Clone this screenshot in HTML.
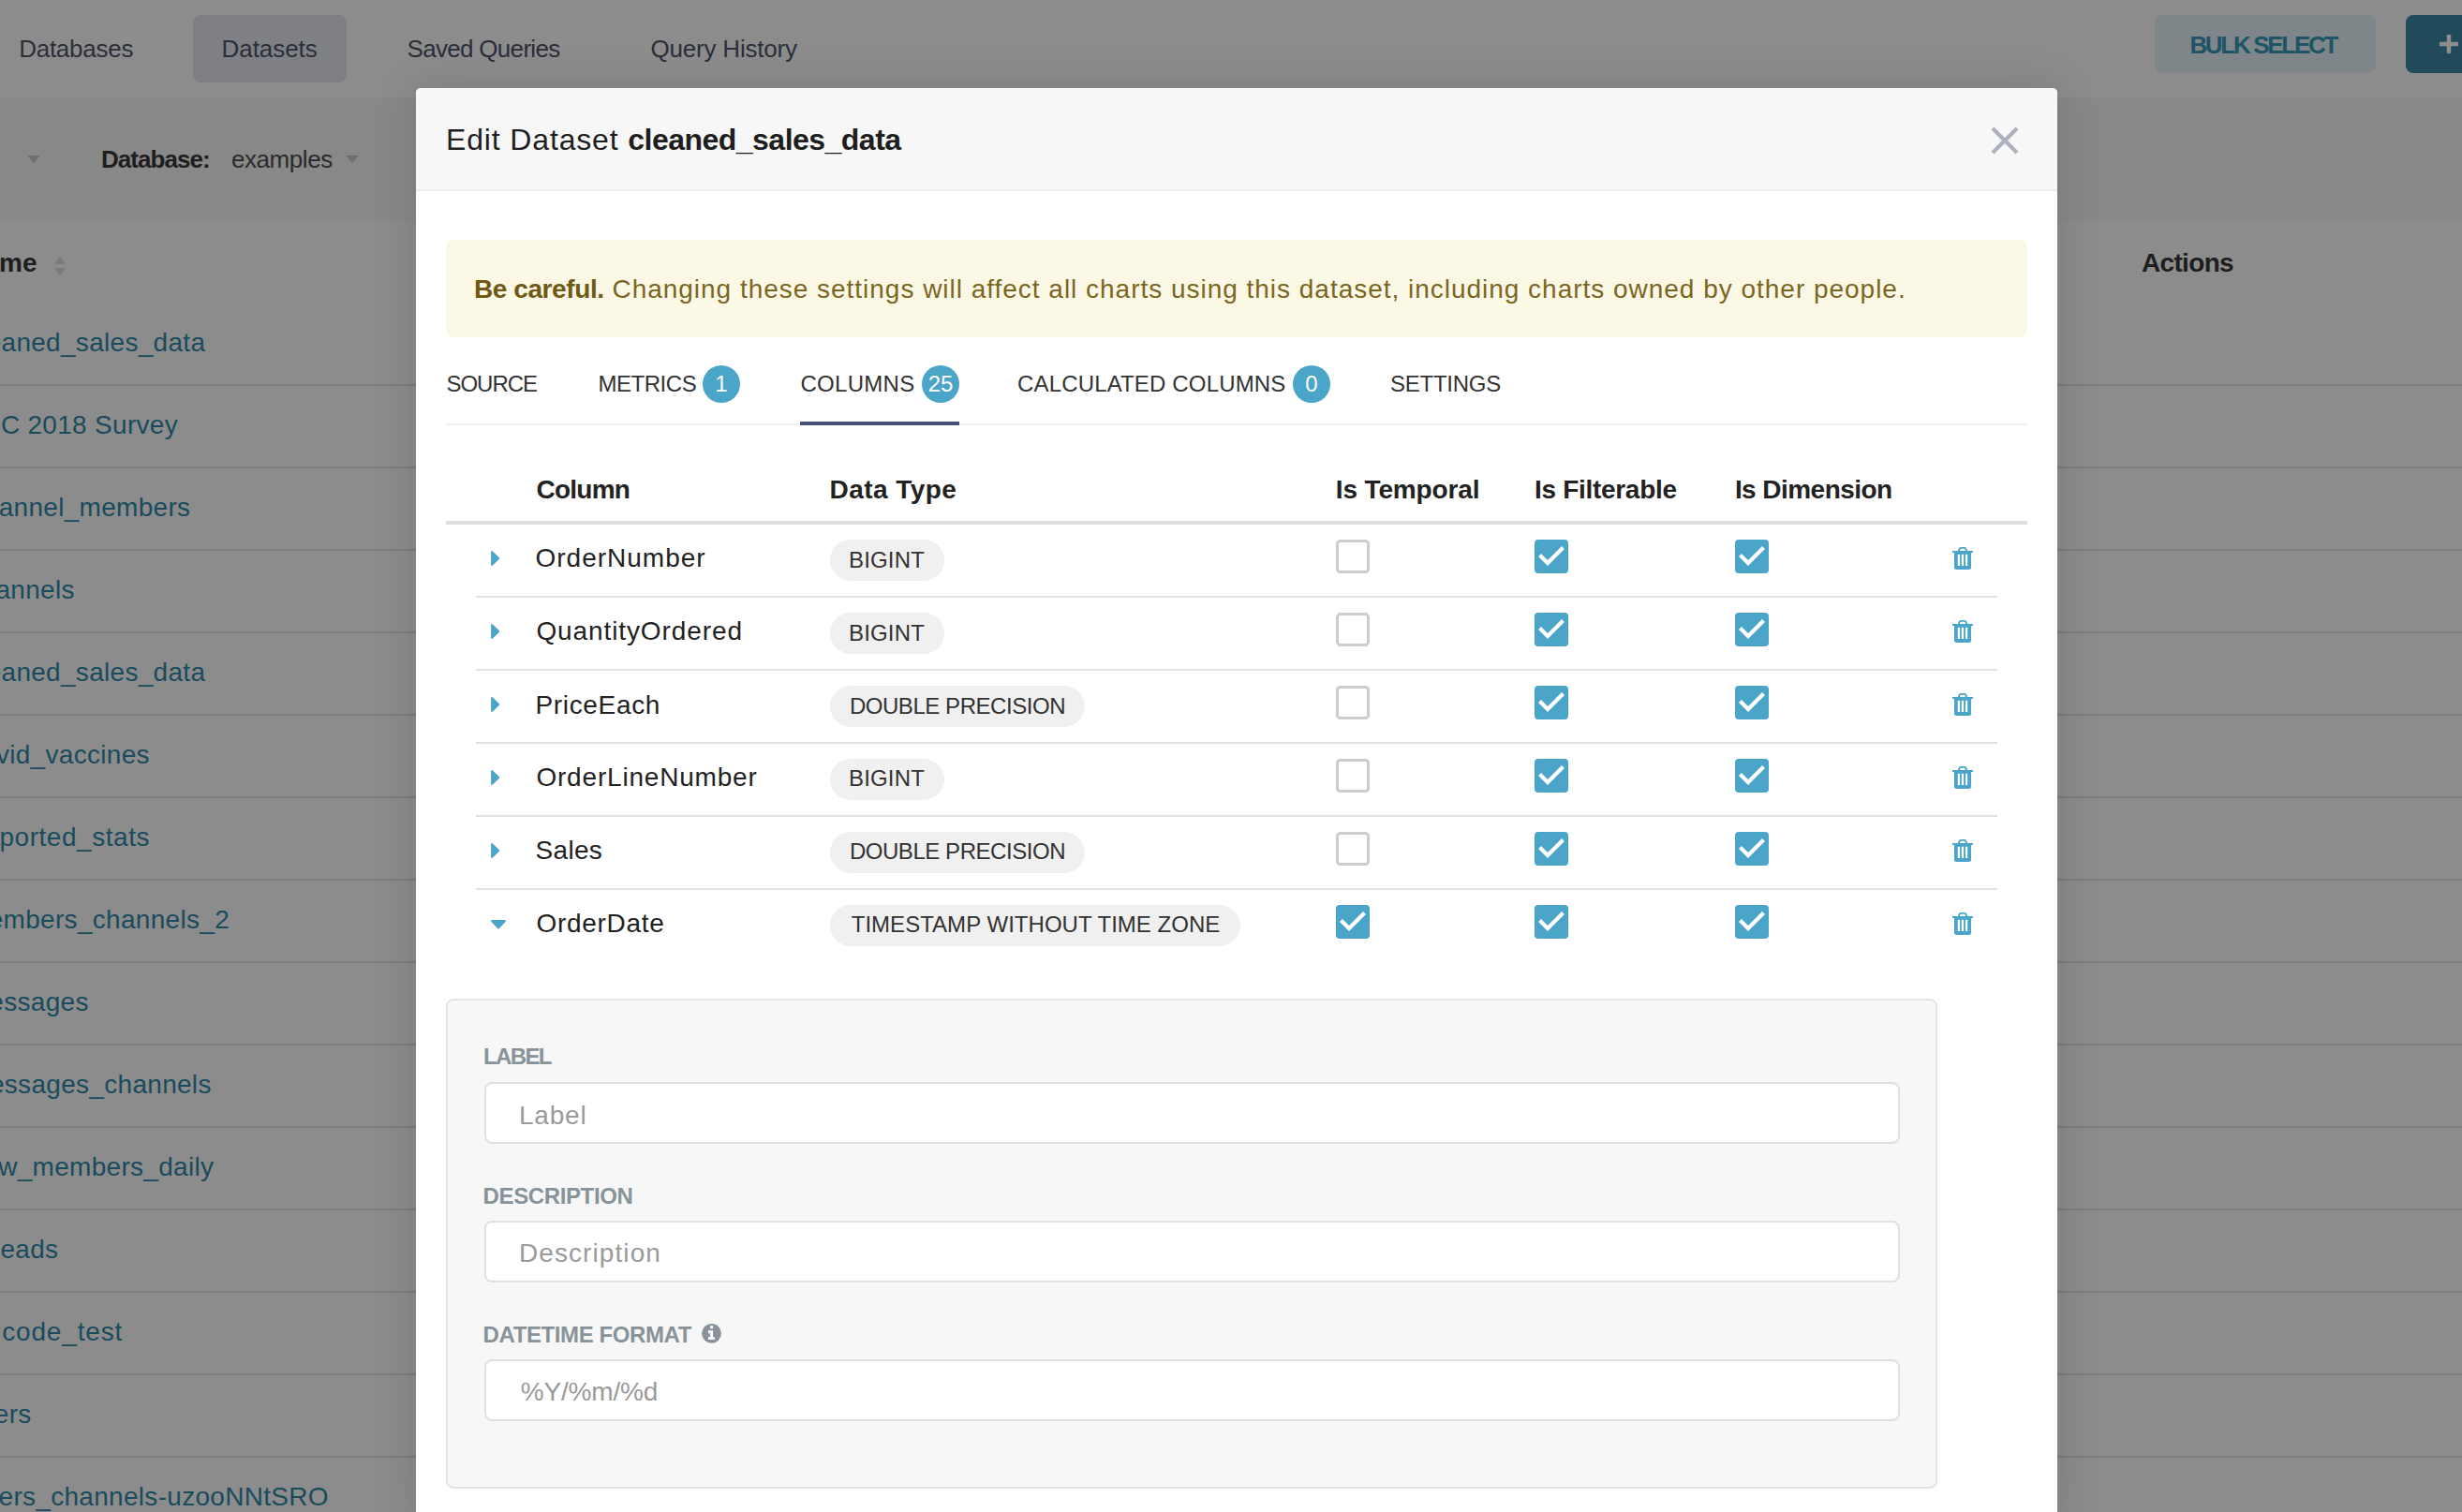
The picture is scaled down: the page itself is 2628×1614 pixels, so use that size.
<!DOCTYPE html>
<html><head><meta charset="utf-8"><style>
*{box-sizing:border-box;margin:0;padding:0}
html,body{width:2628px;height:1614px;overflow:hidden;background:#8c8c8c;font-family:"Liberation Sans",sans-serif;position:relative}
.a{position:absolute;white-space:pre}
</style></head><body>
<div class="a" style="left:0px;top:0px;width:2628px;height:104px;background:#8c8c8c;"></div>
<div class="a" style="left:206px;top:16px;width:164px;height:72px;background:#7f8084;border-radius:8px"></div>
<div class="a" style="left:20.2px;top:38.8px;font-size:26px;line-height:26px;color:#2b2e3a;font-weight:400;letter-spacing:-0.26px;">Databases</div>
<div class="a" style="left:236.6px;top:38.8px;font-size:26px;line-height:26px;color:#2b2e3a;font-weight:400;letter-spacing:-0.07px;">Datasets</div>
<div class="a" style="left:434.5px;top:38.8px;font-size:26px;line-height:26px;color:#2b2e3a;font-weight:400;letter-spacing:-0.69px;">Saved Queries</div>
<div class="a" style="left:694.5px;top:38.8px;font-size:26px;line-height:26px;color:#2b2e3a;font-weight:400;letter-spacing:-0.20px;">Query History</div>
<div class="a" style="left:2300px;top:16px;width:236px;height:62px;background:#7e8689;border-radius:8px"></div>
<div class="a" style="left:2337.4px;top:34.5px;font-size:26px;line-height:26px;color:#1f5366;font-weight:700;letter-spacing:-2.31px;">BULK SELECT</div>
<div class="a" style="left:2568px;top:16px;width:80px;height:62px;background:#214a5a;border-radius:8px"></div>
<svg class="a" style="left:2604px;top:37px" width="20" height="20"><path d="M10 0V20M0 10H20" stroke="#8d8d8d" stroke-width="4.5"/></svg>
<div class="a" style="left:0px;top:104px;width:2628px;height:132px;background:#888888;"></div>
<div class="a" style="left:108.0px;top:157.0px;font-size:26px;line-height:26px;color:#1e1e1e;font-weight:700;letter-spacing:-0.94px;">Database:</div>
<div class="a" style="left:247.0px;top:157.0px;font-size:26px;line-height:26px;color:#2a2a2a;font-weight:400;letter-spacing:-0.44px;">examples</div>
<svg class="a" style="left:29px;top:166px" width="14" height="8"><path d="M0 0H14L7 8Z" fill="#6e6e6e"/></svg>
<svg class="a" style="left:369px;top:166px" width="14" height="8"><path d="M0 0H14L7 8Z" fill="#6e6e6e"/></svg>
<div class="a" style="left:-1.0px;top:267.3px;font-size:28px;line-height:28px;color:#1e1e1e;font-weight:700;letter-spacing:0.00px;">me</div>
<svg class="a" style="left:58px;top:274px" width="12" height="20"><path d="M6 1.6L10.2 6.9H1.8Z M6 18.6L10.2 13H1.8Z" fill="#7a7a7a" stroke="#7a7a7a" stroke-width="1.6" stroke-linejoin="round"/></svg>
<div class="a" style="left:2285.9px;top:267.3px;font-size:28px;line-height:28px;color:#1e1e1e;font-weight:700;letter-spacing:-0.65px;">Actions</div>
<div class="a" style="right:2408.7px;top:351.9px;font-size:28px;line-height:28px;color:#1a4b5d;letter-spacing:0.3px">cleaned_sales_data</div>
<div class="a" style="right:2438.0px;top:439.9px;font-size:28px;line-height:28px;color:#1a4b5d;letter-spacing:0.3px">FCC 2018 Survey</div>
<div class="a" style="right:2424.7px;top:527.9px;font-size:28px;line-height:28px;color:#1a4b5d;letter-spacing:0.3px">channel_members</div>
<div class="a" style="right:2548.3px;top:615.9px;font-size:28px;line-height:28px;color:#1a4b5d;letter-spacing:0.3px">channels</div>
<div class="a" style="right:2408.7px;top:703.9px;font-size:28px;line-height:28px;color:#1a4b5d;letter-spacing:0.3px">cleaned_sales_data</div>
<div class="a" style="right:2468.2px;top:791.9px;font-size:28px;line-height:28px;color:#1a4b5d;letter-spacing:0.3px">covid_vaccines</div>
<div class="a" style="right:2467.9px;top:879.9px;font-size:28px;line-height:28px;color:#1a4b5d;letter-spacing:0.55px">ported_stats</div>
<div class="a" style="right:2383.0px;top:967.9px;font-size:28px;line-height:28px;color:#1a4b5d;letter-spacing:0.3px">members_channels_2</div>
<div class="a" style="right:2533.3px;top:1055.9px;font-size:28px;line-height:28px;color:#1a4b5d;letter-spacing:0.3px">messages</div>
<div class="a" style="right:2402.3px;top:1143.9px;font-size:28px;line-height:28px;color:#1a4b5d;letter-spacing:0.3px">messages_channels</div>
<div class="a" style="right:2399.7px;top:1231.9px;font-size:28px;line-height:28px;color:#1a4b5d;letter-spacing:0.3px">new_members_daily</div>
<div class="a" style="right:2565.7px;top:1319.9px;font-size:28px;line-height:28px;color:#1a4b5d;letter-spacing:0.3px">eads</div>
<div class="a" style="right:2496.8px;top:1407.9px;font-size:28px;line-height:28px;color:#1a4b5d;letter-spacing:0.85px">code_test</div>
<div class="a" style="right:2594.4px;top:1495.9px;font-size:28px;line-height:28px;color:#1a4b5d;letter-spacing:0.3px">users</div>
<div class="a" style="right:2277.1px;top:1583.9px;font-size:28px;line-height:28px;color:#1a4b5d;letter-spacing:0.3px">users_channels-uzooNNtSRO</div>
<div class="a" style="left:0px;top:410px;width:2628px;height:2px;background:#7b7b7b;"></div>
<div class="a" style="left:0px;top:498px;width:2628px;height:2px;background:#7b7b7b;"></div>
<div class="a" style="left:0px;top:586px;width:2628px;height:2px;background:#7b7b7b;"></div>
<div class="a" style="left:0px;top:674px;width:2628px;height:2px;background:#7b7b7b;"></div>
<div class="a" style="left:0px;top:762px;width:2628px;height:2px;background:#7b7b7b;"></div>
<div class="a" style="left:0px;top:850px;width:2628px;height:2px;background:#7b7b7b;"></div>
<div class="a" style="left:0px;top:938px;width:2628px;height:2px;background:#7b7b7b;"></div>
<div class="a" style="left:0px;top:1026px;width:2628px;height:2px;background:#7b7b7b;"></div>
<div class="a" style="left:0px;top:1114px;width:2628px;height:2px;background:#7b7b7b;"></div>
<div class="a" style="left:0px;top:1202px;width:2628px;height:2px;background:#7b7b7b;"></div>
<div class="a" style="left:0px;top:1290px;width:2628px;height:2px;background:#7b7b7b;"></div>
<div class="a" style="left:0px;top:1378px;width:2628px;height:2px;background:#7b7b7b;"></div>
<div class="a" style="left:0px;top:1466px;width:2628px;height:2px;background:#7b7b7b;"></div>
<div class="a" style="left:0px;top:1554px;width:2628px;height:2px;background:#7b7b7b;"></div>
<div class="a" style="left:0px;top:1642px;width:2628px;height:2px;background:#7b7b7b;"></div>
<div class="a" style="left:444px;top:94px;width:1752px;height:1540px;background:#ffffff;border-radius:5px 5px 0 0;box-shadow:0 0 48px rgba(0,0,0,0.13)"></div>
<div class="a" style="left:444px;top:94px;width:1752px;height:110px;background:#f7f7f7;border-radius:5px 5px 0 0;border-bottom:2px solid #eeeeee"></div>
<div class="a" style="left:476.0px;top:132.9px;font-size:32px;line-height:32px;color:#1e1e1e;font-weight:400;letter-spacing:0.85px;">Edit Dataset <b style="letter-spacing:-0.52px">cleaned_sales_data</b></div>
<svg class="a" style="left:2124px;top:134px" width="32" height="32"><path d="M3 3L29 29M29 3L3 29" stroke="#adb0be" stroke-width="4.2"/></svg>
<div class="a" style="left:476px;top:256px;width:1688px;height:104px;background:#fbf8e6;border-radius:8px"></div>
<div class="a" style="left:505.9px;top:294.9px;font-size:28px;line-height:28px;color:#7b661f;font-weight:400;letter-spacing:0.98px;"><b style="color:#6f5a15;letter-spacing:-0.4px">Be careful.</b> Changing these settings will affect all charts using this dataset, including charts owned by other people.</div>
<div class="a" style="left:476.4px;top:397.7px;font-size:24px;line-height:24px;color:#323232;font-weight:400;letter-spacing:-1.00px;">SOURCE</div>
<div class="a" style="left:638.5px;top:397.7px;font-size:24px;line-height:24px;color:#323232;font-weight:400;letter-spacing:-0.47px;">METRICS</div>
<div class="a" style="left:854.5px;top:397.7px;font-size:24px;line-height:24px;color:#323232;font-weight:400;letter-spacing:0.28px;">COLUMNS</div>
<div class="a" style="left:1086.0px;top:397.7px;font-size:24px;line-height:24px;color:#323232;font-weight:400;letter-spacing:0.16px;">CALCULATED COLUMNS</div>
<div class="a" style="left:1483.9px;top:397.7px;font-size:24px;line-height:24px;color:#323232;font-weight:400;letter-spacing:-0.23px;">SETTINGS</div>
<div class="a" style="left:750px;top:390px;width:40px;height:40px;border-radius:20px;background:#4ba5c8;color:#fff;font-size:24px;line-height:40px;text-align:center">1</div>
<div class="a" style="left:984px;top:390px;width:40px;height:40px;border-radius:20px;background:#4ba5c8;color:#fff;font-size:24px;line-height:40px;text-align:center">25</div>
<div class="a" style="left:1380px;top:390px;width:40px;height:40px;border-radius:20px;background:#4ba5c8;color:#fff;font-size:24px;line-height:40px;text-align:center">0</div>
<div class="a" style="left:476px;top:452px;width:1688px;height:2px;background:#f0f0f0;"></div>
<div class="a" style="left:854px;top:450px;width:170px;height:4px;background:#474f7b;"></div>
<div class="a" style="left:572.4px;top:508.9px;font-size:28px;line-height:28px;color:#222222;font-weight:700;letter-spacing:-0.73px;">Column</div>
<div class="a" style="left:885.5px;top:508.9px;font-size:28px;line-height:28px;color:#222222;font-weight:700;letter-spacing:0.46px;">Data Type</div>
<div class="a" style="left:1425.8px;top:508.9px;font-size:28px;line-height:28px;color:#222222;font-weight:700;letter-spacing:-0.14px;">Is Temporal</div>
<div class="a" style="left:1637.9px;top:508.9px;font-size:28px;line-height:28px;color:#222222;font-weight:700;letter-spacing:-0.29px;">Is Filterable</div>
<div class="a" style="left:1851.9px;top:508.9px;font-size:28px;line-height:28px;color:#222222;font-weight:700;letter-spacing:-0.55px;">Is Dimension</div>
<div class="a" style="left:476px;top:556px;width:1688px;height:4px;background:#dedede;"></div>
<svg class="a" style="left:523px;top:587.0px" width="12" height="18"><path d="M2 2L9.3 9L2 16Z" fill="#4ba5c8" stroke="#4ba5c8" stroke-width="1.8" stroke-linejoin="round"/></svg>
<div class="a" style="left:571.5px;top:582.3px;font-size:28px;line-height:28px;color:#222222;font-weight:400;letter-spacing:1.00px;">OrderNumber</div>
<div class="a" style="left:886px;top:576.0px;width:122px;height:44px;border-radius:22px;background:#f0f0f0"></div>
<div class="a" style="left:906.0px;top:585.7px;font-size:24px;line-height:24px;color:#323232;font-weight:400;letter-spacing:0.16px;">BIGINT</div>
<svg class="a" style="left:1426px;top:576px" width="36" height="36"><rect x="1.5" y="1.5" width="33" height="33" rx="3" fill="#fff" stroke="#cccccc" stroke-width="3"/></svg>
<svg class="a" style="left:1638px;top:576px" width="36" height="36"><rect x="0" y="0" width="36" height="36" rx="4" fill="#4ba5c8"/><path d="M5.5 16.5L14 25L30.5 8.5" fill="none" stroke="#fff" stroke-width="4.2"/></svg>
<svg class="a" style="left:1852px;top:576px" width="36" height="36"><rect x="0" y="0" width="36" height="36" rx="4" fill="#4ba5c8"/><path d="M5.5 16.5L14 25L30.5 8.5" fill="none" stroke="#fff" stroke-width="4.2"/></svg>
<svg class="a" style="left:2075px;top:575.0px" width="40" height="40"><path d="M15.6 13.5L16.6 10.9Q16.9 9.9 18 9.9H22Q23.1 9.9 23.4 10.9L24.4 13.5" fill="none" stroke="#4ba5c8" stroke-width="1.9"/><rect x="9" y="13" width="22" height="2" fill="#4ba5c8"/><path d="M11 14.5H29V30.8Q29 33 26.8 33H13.2Q11 33 11 30.8Z" fill="#4ba5c8"/><rect x="14.8" y="16.8" width="2.3" height="12.2" fill="#fff"/><rect x="18.9" y="16.8" width="2.2" height="12.2" fill="#fff"/><rect x="23" y="16.8" width="2.2" height="12.2" fill="#fff"/></svg>
<div class="a" style="left:508px;top:636px;width:1624px;height:2px;background:#e3e3e3;"></div>
<svg class="a" style="left:523px;top:664.9px" width="12" height="18"><path d="M2 2L9.3 9L2 16Z" fill="#4ba5c8" stroke="#4ba5c8" stroke-width="1.8" stroke-linejoin="round"/></svg>
<div class="a" style="left:572.4px;top:659.9px;font-size:28px;line-height:28px;color:#222222;font-weight:400;letter-spacing:0.90px;">QuantityOrdered</div>
<div class="a" style="left:886px;top:653.9px;width:122px;height:44px;border-radius:22px;background:#f0f0f0"></div>
<div class="a" style="left:906.0px;top:663.6px;font-size:24px;line-height:24px;color:#323232;font-weight:400;letter-spacing:0.16px;">BIGINT</div>
<svg class="a" style="left:1426px;top:654px" width="36" height="36"><rect x="1.5" y="1.5" width="33" height="33" rx="3" fill="#fff" stroke="#cccccc" stroke-width="3"/></svg>
<svg class="a" style="left:1638px;top:654px" width="36" height="36"><rect x="0" y="0" width="36" height="36" rx="4" fill="#4ba5c8"/><path d="M5.5 16.5L14 25L30.5 8.5" fill="none" stroke="#fff" stroke-width="4.2"/></svg>
<svg class="a" style="left:1852px;top:654px" width="36" height="36"><rect x="0" y="0" width="36" height="36" rx="4" fill="#4ba5c8"/><path d="M5.5 16.5L14 25L30.5 8.5" fill="none" stroke="#fff" stroke-width="4.2"/></svg>
<svg class="a" style="left:2075px;top:652.9px" width="40" height="40"><path d="M15.6 13.5L16.6 10.9Q16.9 9.9 18 9.9H22Q23.1 9.9 23.4 10.9L24.4 13.5" fill="none" stroke="#4ba5c8" stroke-width="1.9"/><rect x="9" y="13" width="22" height="2" fill="#4ba5c8"/><path d="M11 14.5H29V30.8Q29 33 26.8 33H13.2Q11 33 11 30.8Z" fill="#4ba5c8"/><rect x="14.8" y="16.8" width="2.3" height="12.2" fill="#fff"/><rect x="18.9" y="16.8" width="2.2" height="12.2" fill="#fff"/><rect x="23" y="16.8" width="2.2" height="12.2" fill="#fff"/></svg>
<div class="a" style="left:508px;top:714px;width:1624px;height:2px;background:#e3e3e3;"></div>
<svg class="a" style="left:523px;top:742.8px" width="12" height="18"><path d="M2 2L9.3 9L2 16Z" fill="#4ba5c8" stroke="#4ba5c8" stroke-width="1.8" stroke-linejoin="round"/></svg>
<div class="a" style="left:571.5px;top:738.9px;font-size:28px;line-height:28px;color:#222222;font-weight:400;letter-spacing:0.66px;">PriceEach</div>
<div class="a" style="left:886px;top:731.8px;width:272px;height:44px;border-radius:22px;background:#f0f0f0"></div>
<div class="a" style="left:906.9px;top:741.5px;font-size:24px;line-height:24px;color:#323232;font-weight:400;letter-spacing:-0.45px;">DOUBLE PRECISION</div>
<svg class="a" style="left:1426px;top:732px" width="36" height="36"><rect x="1.5" y="1.5" width="33" height="33" rx="3" fill="#fff" stroke="#cccccc" stroke-width="3"/></svg>
<svg class="a" style="left:1638px;top:732px" width="36" height="36"><rect x="0" y="0" width="36" height="36" rx="4" fill="#4ba5c8"/><path d="M5.5 16.5L14 25L30.5 8.5" fill="none" stroke="#fff" stroke-width="4.2"/></svg>
<svg class="a" style="left:1852px;top:732px" width="36" height="36"><rect x="0" y="0" width="36" height="36" rx="4" fill="#4ba5c8"/><path d="M5.5 16.5L14 25L30.5 8.5" fill="none" stroke="#fff" stroke-width="4.2"/></svg>
<svg class="a" style="left:2075px;top:730.8px" width="40" height="40"><path d="M15.6 13.5L16.6 10.9Q16.9 9.9 18 9.9H22Q23.1 9.9 23.4 10.9L24.4 13.5" fill="none" stroke="#4ba5c8" stroke-width="1.9"/><rect x="9" y="13" width="22" height="2" fill="#4ba5c8"/><path d="M11 14.5H29V30.8Q29 33 26.8 33H13.2Q11 33 11 30.8Z" fill="#4ba5c8"/><rect x="14.8" y="16.8" width="2.3" height="12.2" fill="#fff"/><rect x="18.9" y="16.8" width="2.2" height="12.2" fill="#fff"/><rect x="23" y="16.8" width="2.2" height="12.2" fill="#fff"/></svg>
<div class="a" style="left:508px;top:792px;width:1624px;height:2px;background:#e3e3e3;"></div>
<svg class="a" style="left:523px;top:820.7px" width="12" height="18"><path d="M2 2L9.3 9L2 16Z" fill="#4ba5c8" stroke="#4ba5c8" stroke-width="1.8" stroke-linejoin="round"/></svg>
<div class="a" style="left:572.4px;top:816.3px;font-size:28px;line-height:28px;color:#222222;font-weight:400;letter-spacing:0.81px;">OrderLineNumber</div>
<div class="a" style="left:886px;top:809.7px;width:122px;height:44px;border-radius:22px;background:#f0f0f0"></div>
<div class="a" style="left:906.0px;top:819.4px;font-size:24px;line-height:24px;color:#323232;font-weight:400;letter-spacing:0.16px;">BIGINT</div>
<svg class="a" style="left:1426px;top:810px" width="36" height="36"><rect x="1.5" y="1.5" width="33" height="33" rx="3" fill="#fff" stroke="#cccccc" stroke-width="3"/></svg>
<svg class="a" style="left:1638px;top:810px" width="36" height="36"><rect x="0" y="0" width="36" height="36" rx="4" fill="#4ba5c8"/><path d="M5.5 16.5L14 25L30.5 8.5" fill="none" stroke="#fff" stroke-width="4.2"/></svg>
<svg class="a" style="left:1852px;top:810px" width="36" height="36"><rect x="0" y="0" width="36" height="36" rx="4" fill="#4ba5c8"/><path d="M5.5 16.5L14 25L30.5 8.5" fill="none" stroke="#fff" stroke-width="4.2"/></svg>
<svg class="a" style="left:2075px;top:808.7px" width="40" height="40"><path d="M15.6 13.5L16.6 10.9Q16.9 9.9 18 9.9H22Q23.1 9.9 23.4 10.9L24.4 13.5" fill="none" stroke="#4ba5c8" stroke-width="1.9"/><rect x="9" y="13" width="22" height="2" fill="#4ba5c8"/><path d="M11 14.5H29V30.8Q29 33 26.8 33H13.2Q11 33 11 30.8Z" fill="#4ba5c8"/><rect x="14.8" y="16.8" width="2.3" height="12.2" fill="#fff"/><rect x="18.9" y="16.8" width="2.2" height="12.2" fill="#fff"/><rect x="23" y="16.8" width="2.2" height="12.2" fill="#fff"/></svg>
<div class="a" style="left:508px;top:870px;width:1624px;height:2px;background:#e3e3e3;"></div>
<svg class="a" style="left:523px;top:898.6px" width="12" height="18"><path d="M2 2L9.3 9L2 16Z" fill="#4ba5c8" stroke="#4ba5c8" stroke-width="1.8" stroke-linejoin="round"/></svg>
<div class="a" style="left:571.5px;top:894.3px;font-size:28px;line-height:28px;color:#222222;font-weight:400;letter-spacing:0.32px;">Sales</div>
<div class="a" style="left:886px;top:887.6px;width:272px;height:44px;border-radius:22px;background:#f0f0f0"></div>
<div class="a" style="left:906.9px;top:897.3px;font-size:24px;line-height:24px;color:#323232;font-weight:400;letter-spacing:-0.45px;">DOUBLE PRECISION</div>
<svg class="a" style="left:1426px;top:888px" width="36" height="36"><rect x="1.5" y="1.5" width="33" height="33" rx="3" fill="#fff" stroke="#cccccc" stroke-width="3"/></svg>
<svg class="a" style="left:1638px;top:888px" width="36" height="36"><rect x="0" y="0" width="36" height="36" rx="4" fill="#4ba5c8"/><path d="M5.5 16.5L14 25L30.5 8.5" fill="none" stroke="#fff" stroke-width="4.2"/></svg>
<svg class="a" style="left:1852px;top:888px" width="36" height="36"><rect x="0" y="0" width="36" height="36" rx="4" fill="#4ba5c8"/><path d="M5.5 16.5L14 25L30.5 8.5" fill="none" stroke="#fff" stroke-width="4.2"/></svg>
<svg class="a" style="left:2075px;top:886.6px" width="40" height="40"><path d="M15.6 13.5L16.6 10.9Q16.9 9.9 18 9.9H22Q23.1 9.9 23.4 10.9L24.4 13.5" fill="none" stroke="#4ba5c8" stroke-width="1.9"/><rect x="9" y="13" width="22" height="2" fill="#4ba5c8"/><path d="M11 14.5H29V30.8Q29 33 26.8 33H13.2Q11 33 11 30.8Z" fill="#4ba5c8"/><rect x="14.8" y="16.8" width="2.3" height="12.2" fill="#fff"/><rect x="18.9" y="16.8" width="2.2" height="12.2" fill="#fff"/><rect x="23" y="16.8" width="2.2" height="12.2" fill="#fff"/></svg>
<div class="a" style="left:508px;top:948px;width:1624px;height:2px;background:#e3e3e3;"></div>
<svg class="a" style="left:522px;top:980px" width="20" height="14"><path d="M3 3H17L10 10.6Z" fill="#4ba5c8" stroke="#4ba5c8" stroke-width="1.9" stroke-linejoin="round"/></svg>
<div class="a" style="left:572.4px;top:972.0px;font-size:28px;line-height:28px;color:#222222;font-weight:400;letter-spacing:0.72px;">OrderDate</div>
<div class="a" style="left:886px;top:965.5px;width:438px;height:44px;border-radius:22px;background:#f0f0f0"></div>
<div class="a" style="left:908.7px;top:975.2px;font-size:24px;line-height:24px;color:#323232;font-weight:400;letter-spacing:0.03px;">TIMESTAMP WITHOUT TIME ZONE</div>
<svg class="a" style="left:1426px;top:966px" width="36" height="36"><rect x="0" y="0" width="36" height="36" rx="4" fill="#4ba5c8"/><path d="M5.5 16.5L14 25L30.5 8.5" fill="none" stroke="#fff" stroke-width="4.2"/></svg>
<svg class="a" style="left:1638px;top:966px" width="36" height="36"><rect x="0" y="0" width="36" height="36" rx="4" fill="#4ba5c8"/><path d="M5.5 16.5L14 25L30.5 8.5" fill="none" stroke="#fff" stroke-width="4.2"/></svg>
<svg class="a" style="left:1852px;top:966px" width="36" height="36"><rect x="0" y="0" width="36" height="36" rx="4" fill="#4ba5c8"/><path d="M5.5 16.5L14 25L30.5 8.5" fill="none" stroke="#fff" stroke-width="4.2"/></svg>
<svg class="a" style="left:2075px;top:964.5px" width="40" height="40"><path d="M15.6 13.5L16.6 10.9Q16.9 9.9 18 9.9H22Q23.1 9.9 23.4 10.9L24.4 13.5" fill="none" stroke="#4ba5c8" stroke-width="1.9"/><rect x="9" y="13" width="22" height="2" fill="#4ba5c8"/><path d="M11 14.5H29V30.8Q29 33 26.8 33H13.2Q11 33 11 30.8Z" fill="#4ba5c8"/><rect x="14.8" y="16.8" width="2.3" height="12.2" fill="#fff"/><rect x="18.9" y="16.8" width="2.2" height="12.2" fill="#fff"/><rect x="23" y="16.8" width="2.2" height="12.2" fill="#fff"/></svg>
<div class="a" style="left:476px;top:1066px;width:1592px;height:523px;background:#f7f7f7;border:2px solid #e3e3e3;border-radius:8px"></div>
<div class="a" style="left:516.0px;top:1116.3px;font-size:24px;line-height:24px;color:#879399;font-weight:700;letter-spacing:-1.62px;">LABEL</div>
<div class="a" style="left:516.5px;top:1155px;width:1511px;height:66px;background:#ffffff;border:2px solid #e0e0e0;border-radius:8px"></div>
<div class="a" style="left:515.6px;top:1264.7px;font-size:24px;line-height:24px;color:#879399;font-weight:700;letter-spacing:-0.38px;">DESCRIPTION</div>
<div class="a" style="left:516.5px;top:1303px;width:1511px;height:66px;background:#ffffff;border:2px solid #e0e0e0;border-radius:8px"></div>
<div class="a" style="left:515.6px;top:1412.7px;font-size:24px;line-height:24px;color:#879399;font-weight:700;letter-spacing:-0.40px;">DATETIME FORMAT</div>
<div class="a" style="left:516.5px;top:1451px;width:1511px;height:66px;background:#ffffff;border:2px solid #e0e0e0;border-radius:8px"></div>
<div class="a" style="left:554.0px;top:1176.5px;font-size:28px;line-height:28px;color:#9a9a9a;font-weight:400;letter-spacing:0.79px;">Label</div>
<div class="a" style="left:554.0px;top:1324.0px;font-size:28px;line-height:28px;color:#9a9a9a;font-weight:400;letter-spacing:1.08px;">Description</div>
<div class="a" style="left:555.8px;top:1472.3px;font-size:28px;line-height:28px;color:#9a9a9a;font-weight:400;letter-spacing:-0.19px;">%Y/%m/%d</div>
<svg class="a" style="left:749px;top:1413px" width="21" height="21"><circle cx="10.5" cy="10.4" r="10.4" fill="#879399"/><rect x="9.1" y="2.2" width="3" height="3" fill="#fff"/><rect x="9.1" y="7.2" width="3" height="9.8" fill="#fff"/><rect x="7" y="7.2" width="2.2" height="3.1" fill="#fff"/><rect x="7" y="14.2" width="6.9" height="2.8" fill="#fff"/></svg>
</body></html>
